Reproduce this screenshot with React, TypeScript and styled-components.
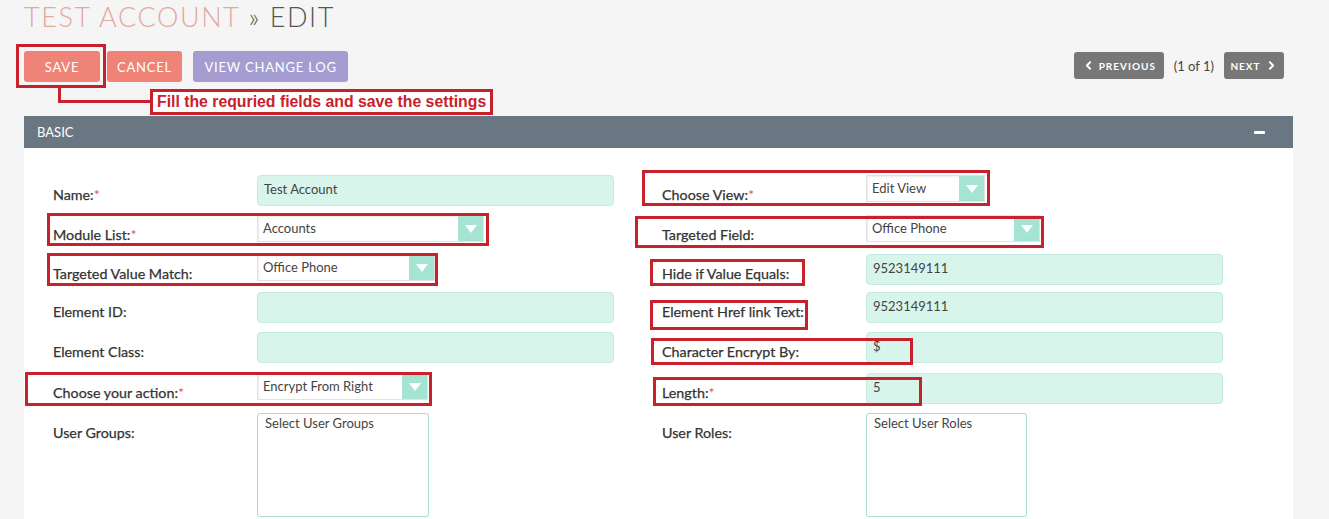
import React from "react";
import styled, { createGlobalStyle } from "styled-components";
import { ChevronLeft, ChevronRight } from "lucide-react";

const Global = createGlobalStyle`
  html, body { margin: 0; padding: 0; background: #f5f5f5; }
  body { font-family: Lato, "Open Sans", sans-serif; color: #444; }
  * { box-sizing: border-box; }
`;

const Page = styled.div`
  position: relative;
  width: 1329px;
  height: 519px;
  overflow: hidden;
  padding: 0 36px 0 24px;
`;

const Title = styled.h1`
  margin: 0;
  height: 44px;
  font-family: Lato, sans-serif;
  font-weight: 300;
  font-size: 27px;
  line-height: 34px;
  letter-spacing: 1.6px;
  color: #555;
  white-space: nowrap;
`;

const Module = styled.span`
  color: #e3a89e;
`;

const Toolbar = styled.div`
  display: flex;
  align-items: flex-start;
  justify-content: space-between;
  padding-top: 7px;
  height: 72px;
`;

const ButtonGroup = styled.div`
  display: flex;
  gap: 7px;
`;

const ActionButton = styled.button<{ $tone: "salmon" | "lavender"; $gap?: number; $w?: number }>`
  height: 31px;
  width: ${(p) => (p.$w ? `${p.$w}px` : "auto")};
  padding: 0 10px;
  margin-left: ${(p) => p.$gap ?? 0}px;
  border: 0;
  border-radius: 3px;
  background: ${(p) => (p.$tone === "salmon" ? "#f08377" : "#a59dd1")};
  color: #fff;
  font-family: Lato, sans-serif;
  font-size: 13px;
  letter-spacing: 0.8px;
  text-transform: uppercase;
`;

const Pager = styled.div`
  display: flex;
  align-items: center;
  gap: 10px;
  margin-top: 1px;
  margin-right: 9px;
  font-size: 13px;
  color: #444;
`;

const PagerButton = styled.button<{ $w: number }>`
  width: ${(p) => p.$w}px;
  height: 27px;
  display: flex;
  align-items: center;
  justify-content: center;
  gap: 4px;
  border: 0;
  border-radius: 3px;
  background: #777;
  color: #fff;
  font-family: Lato, sans-serif;
  font-weight: 700;
  font-size: 10px;
  letter-spacing: 1px;
`;

const Panel = styled.section`
  background: #fff;
  height: 420px;
`;

const PanelHeader = styled.div`
  height: 32px;
  background: #6b7683;
  color: #fff;
  display: flex;
  align-items: center;
  justify-content: space-between;
  padding: 0 28px 0 13px;
  font-size: 13px;
`;

const Minus = styled.span`
  width: 11px;
  height: 3px;
  background: #fff;
  border-radius: 1px;
`;

const Body = styled.div`
  padding: 27px 0 0 29px;
`;

const Row = styled.div<{ $h: number }>`
  display: grid;
  grid-template-columns: 561px 561px;
  column-gap: 48px;
  height: ${(p) => p.$h}px;
`;

const Cell = styled.div`
  display: grid;
  grid-template-columns: 204px 357px;
  align-items: start;
`;

const Label = styled.label`
  padding-top: 11px;
  font-size: 14.3px;
  font-weight: 400;
  line-height: 18px;
  color: #333;
  white-space: nowrap;
  -webkit-text-stroke: 0.25px #333;
`;

const Req = styled.span`
  color: #e0535b;
  -webkit-text-stroke: 0;
`;

const TextInput = styled.div<{ $h?: number }>`
  width: 357px;
  height: ${(p) => p.$h ?? 31}px;
  background: #d8f5ec;
  border: 1px solid #c5eadf;
  border-radius: 4px;
  padding: 0 6px;
  font-size: 13px;
  line-height: 27px;
  color: #444;
`;

const Select = styled.div<{ $w: number }>`
  width: ${(p) => p.$w}px;
  height: 27px;
  display: flex;
  background: #fff;
  border: 1px solid #e2e2e2;
  box-shadow: inset 1px 1px 2px rgba(0, 0, 0, 0.08);
  font-size: 13px;
  color: #444;
`;

const SelectText = styled.span`
  flex: 1;
  padding-left: 5px;
  line-height: 24px;
`;

const SelectArrow = styled.span`
  width: 25px;
  background: #a5e3d2;
  display: flex;
  align-items: center;
  justify-content: center;
`;

const Triangle = styled.span`
  width: 0;
  height: 0;
  border-left: 6px solid transparent;
  border-right: 6px solid transparent;
  border-top: 8px solid #fff;
`;

const MultiSelect = styled.div<{ $w: number }>`
  width: ${(p) => p.$w}px;
  height: 104px;
  background: #fff;
  border: 1px solid #a9ddd0;
  border-radius: 3px;
  padding: 1px 7px;
  font-size: 13px;
  line-height: 16px;
  color: #444;
`;

const Annot = styled.div<{ $x: number; $y: number; $w: number; $h: number }>`
  position: absolute;
  left: ${(p) => p.$x}px;
  top: ${(p) => p.$y}px;
  width: ${(p) => p.$w}px;
  height: ${(p) => p.$h}px;
  border: 3px solid #c8212b;
  pointer-events: none;
`;

const Line = styled.div<{ $x: number; $y: number; $w: number; $h: number }>`
  position: absolute;
  left: ${(p) => p.$x}px;
  top: ${(p) => p.$y}px;
  width: ${(p) => p.$w}px;
  height: ${(p) => p.$h}px;
  background: #c8212b;
`;

const Callout = styled.div`
  position: absolute;
  left: 150px;
  top: 89px;
  width: 343px;
  height: 26px;
  border: 3px solid #c8212b;
  background: #fff;
  color: #c8212b;
  font-family: "Liberation Sans", Arial, sans-serif;
  font-weight: 700;
  font-size: 15.8px;
  line-height: 20px;
  padding-left: 4px;
  white-space: nowrap;
`;

const SelectBox = ({ w, value }: { w: number; value: string }) => (
  <Select $w={w}>
    <SelectText>{value}</SelectText>
    <SelectArrow>
      <Triangle />
    </SelectArrow>
  </Select>
);

const Field = ({ label, req, children }: { label: string; req?: boolean; children?: React.ReactNode }) => (
  <Cell>
    <Label>
      {label}
      {req && <Req>*</Req>}
    </Label>
    <div>{children}</div>
  </Cell>
);

const annots = [
  { x: 16, y: 44, w: 90, h: 44 },
  { x: 47, y: 213, w: 442, h: 33 },
  { x: 47, y: 253, w: 391, h: 33 },
  { x: 25, y: 372, w: 407, h: 34 },
  { x: 642, y: 170, w: 348, h: 36 },
  { x: 635, y: 216, w: 409, h: 32 },
  { x: 650, y: 259, w: 155, h: 27 },
  { x: 650, y: 300, w: 158, h: 30 },
  { x: 651, y: 338, w: 262, h: 27 },
  { x: 653, y: 377, w: 269, h: 29 },
];

export default function App() {
  return (
    <Page>
      <Global />
      <Title>
        <Module>TEST ACCOUNT</Module> » EDIT
      </Title>
      <Toolbar>
        <ButtonGroup>
          <ActionButton $tone="salmon" $w={76}>Save</ActionButton>
          <ActionButton $tone="salmon">Cancel</ActionButton>
          <ActionButton $tone="lavender" $gap={4} $w={155}>View Change Log</ActionButton>
        </ButtonGroup>
        <Pager>
          <PagerButton $w={90}>
            <ChevronLeft size={13} strokeWidth={3.5} />
            PREVIOUS
          </PagerButton>
          <span>(1 of 1)</span>
          <PagerButton $w={60}>
            NEXT
            <ChevronRight size={13} strokeWidth={3.5} />
          </PagerButton>
        </Pager>
      </Toolbar>
      <Panel>
        <PanelHeader>
          <span>BASIC</span>
          <Minus />
        </PanelHeader>
        <Body>
          <Row $h={40}>
            <Field label="Name:" req>
              <TextInput>Test Account</TextInput>
            </Field>
            <Field label="Choose View:" req>
              <SelectBox w={119} value="Edit View" />
            </Field>
          </Row>
          <Row $h={39}>
            <Field label="Module List:" req>
              <SelectBox w={227} value="Accounts" />
            </Field>
            <Field label="Targeted Field:">
              <SelectBox w={174} value="Office Phone" />
            </Field>
          </Row>
          <Row $h={38}>
            <Field label="Targeted Value Match:">
              <SelectBox w={178} value="Office Phone" />
            </Field>
            <Field label="Hide if Value Equals:">
              <TextInput>9523149111</TextInput>
            </Field>
          </Row>
          <Row $h={40}>
            <Field label="Element ID:">
              <TextInput />
            </Field>
            <Field label="Element Href link Text:">
              <TextInput>9523149111</TextInput>
            </Field>
          </Row>
          <Row $h={41}>
            <Field label="Element Class:">
              <TextInput />
            </Field>
            <Field label="Character Encrypt By:">
              <TextInput>$</TextInput>
            </Field>
          </Row>
          <Row $h={40}>
            <Field label="Choose your action:" req>
              <SelectBox w={171} value="Encrypt From Right" />
            </Field>
            <Field label="Length:" req>
              <TextInput>5</TextInput>
            </Field>
          </Row>
          <Row $h={110}>
            <Field label="User Groups:">
              <MultiSelect $w={172}>Select User Groups</MultiSelect>
            </Field>
            <Field label="User Roles:">
              <MultiSelect $w={161}>Select User Roles</MultiSelect>
            </Field>
          </Row>
        </Body>
      </Panel>

      {annots.map((a, i) => (
        <Annot key={i} $x={a.x} $y={a.y} $w={a.w} $h={a.h} />
      ))}
      <Line $x={58} $y={86} $w={3} $h={17} />
      <Line $x={58} $y={100} $w={93} $h={3} />
      <Callout>Fill the requried fields and save the settings</Callout>
    </Page>
  );
}
